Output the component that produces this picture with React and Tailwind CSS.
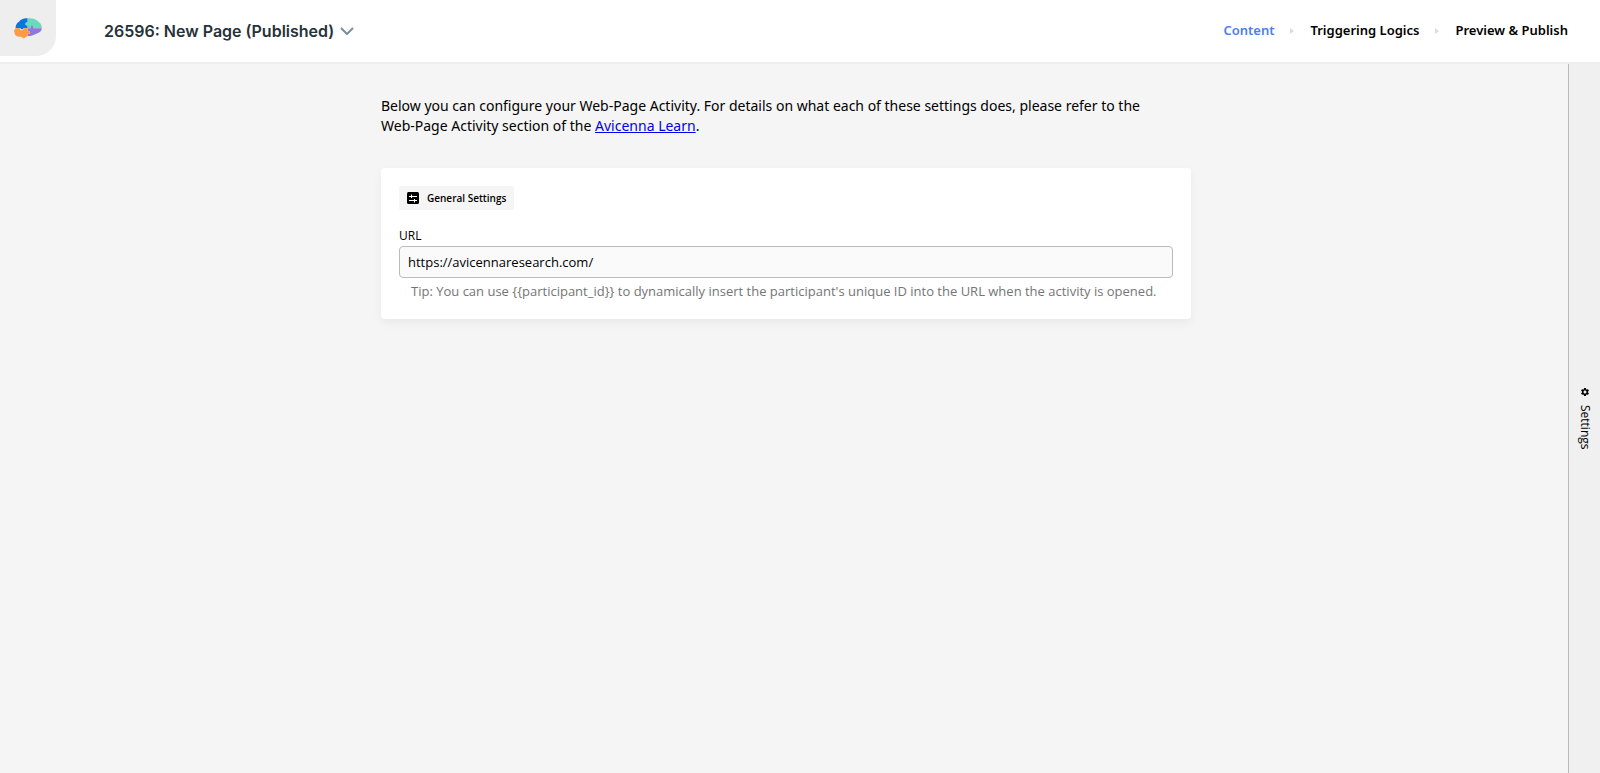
import { Fragment, useState } from 'react'
import { MdSettings } from 'react-icons/md'

const steps = ['Content', 'Triggering Logics', 'Preview & Publish']

function Logo() {
  return (
    <svg width="28" height="21" viewBox="0 0 84 63" aria-hidden="true">
      <path fill="#0b74e0" d="M41 1C31-1 20 4 15 11C8 15 4 23 5 31H20C18 35 30 35 28 31H41V22C32 24 32 12 41 14Z" />
      <path fill="#6adbb9" d="M41 1C55-1 68 5 74 11C81 16 84 22 83 31H58C60 19 48 19 50 31H41V22C32 24 32 12 41 14Z" />
      <path fill="#8d79dc" d="M41 31H50C48 19 60 19 58 31H83C84 38 78 44 70 46C62 50 54 54 48 54H41V48C51 50 51 38 41 40Z" />
      <path fill="#ff9b42" d="M5 31H18C16 39 30 39 28 31H41V40C51 38 51 50 41 48V54C38 57 33 57 31 61C27 62 26 57 20 56C10 57 2 53 2 46C-1 41 0 35 5 31Z" />
    </svg>
  )
}

function SlidersIcon() {
  return (
    <svg width="12" height="12" viewBox="0 0 12 12" aria-hidden="true">
      <rect width="12" height="12" rx="1.5" fill="#000" />
      <path stroke="#fff" strokeWidth="1" d="M2 4.5H10M4.5 2.5V6M2 8.5H10M7.5 7V10.5" />
    </svg>
  )
}

export default function App() {
  const [url, setUrl] = useState('https://avicennaresearch.com/')

  return (
    <div className="flex min-h-screen flex-col bg-[#f5f5f5] font-['Open_Sans',sans-serif] text-black">
      <header className="flex h-16 items-start border-b-2 border-[#eeeeee] bg-white">
        <a href="#" aria-label="Home" className="flex size-14 items-center justify-center rounded-br-[20px] bg-[#eeeeee]">
          <Logo />
        </a>
        <button className="ml-12 flex h-full items-center gap-1.5 font-['Inter',sans-serif] text-base font-semibold text-[#263238]">
          26596: New Page (Published)
          <svg width="14" height="8" viewBox="0 0 14 8" fill="none" stroke="#78909c" strokeWidth="2" aria-hidden="true">
            <path d="M1 1L7 7L13 1" />
          </svg>
        </button>
        <nav className="ml-auto flex h-full items-center gap-4 pr-8 font-['Noto_Sans',sans-serif] text-[13px] font-semibold">
          {steps.map((step, i) => (
            <Fragment key={step}>
              {i > 0 && (
                <svg width="4" height="6" viewBox="0 0 4 6" fill="#dddddd" aria-hidden="true">
                  <path d="M0 0L4 3L0 6Z" />
                </svg>
              )}
              <a href="#" className={i === 0 ? 'text-[#4a80e8]' : ''}>{step}</a>
            </Fragment>
          ))}
        </nav>
      </header>

      <div className="flex flex-1">
        <main className="flex-1 pt-8 pl-1">
          <div className="mx-auto max-w-[810px]">
            <p className="pr-4 font-['Noto_Sans',sans-serif] text-sm leading-5">
              Below you can configure your Web-Page Activity. For details on what each of these settings does, please refer to the Web-Page Activity section of the{' '}
              <a href="#" className="inline-block text-[#0000ee] underline">Avicenna Learn</a>.
            </p>
            <section className="mt-8 rounded bg-white p-[18px] shadow-[0_4px_10px_rgba(0,0,0,0.05)]">
              <h2 className="inline-flex h-6 items-center gap-2 rounded-xs bg-[#f5f5f5] px-2 text-[10px] font-semibold">
                <SlidersIcon />
                General Settings
              </h2>
              <label htmlFor="url" className="mt-4 block text-xs leading-5">URL</label>
              <input
                id="url"
                type="text"
                value={url}
                onChange={(e) => setUrl(e.target.value)}
                className="h-8 w-full rounded border border-[#bbbbbb] bg-[#fafafa] px-2 text-[13px]"
              />
              <p className="mt-[3px] px-3 text-[13px] leading-5 text-[#757575]">
                Tip: You can use {'{{participant_id}}'} to dynamically insert the participant's unique ID into the URL when the activity is opened.
              </p>
            </section>
          </div>
        </main>
        <aside className="flex w-8 border-l border-[#bbbbbb] bg-[#f0f0f0]">
          <button className="flex w-full items-center justify-center gap-2 text-xs [writing-mode:vertical-rl]">
            <MdSettings size={10} />
            Settings
          </button>
        </aside>
      </div>
    </div>
  )
}
